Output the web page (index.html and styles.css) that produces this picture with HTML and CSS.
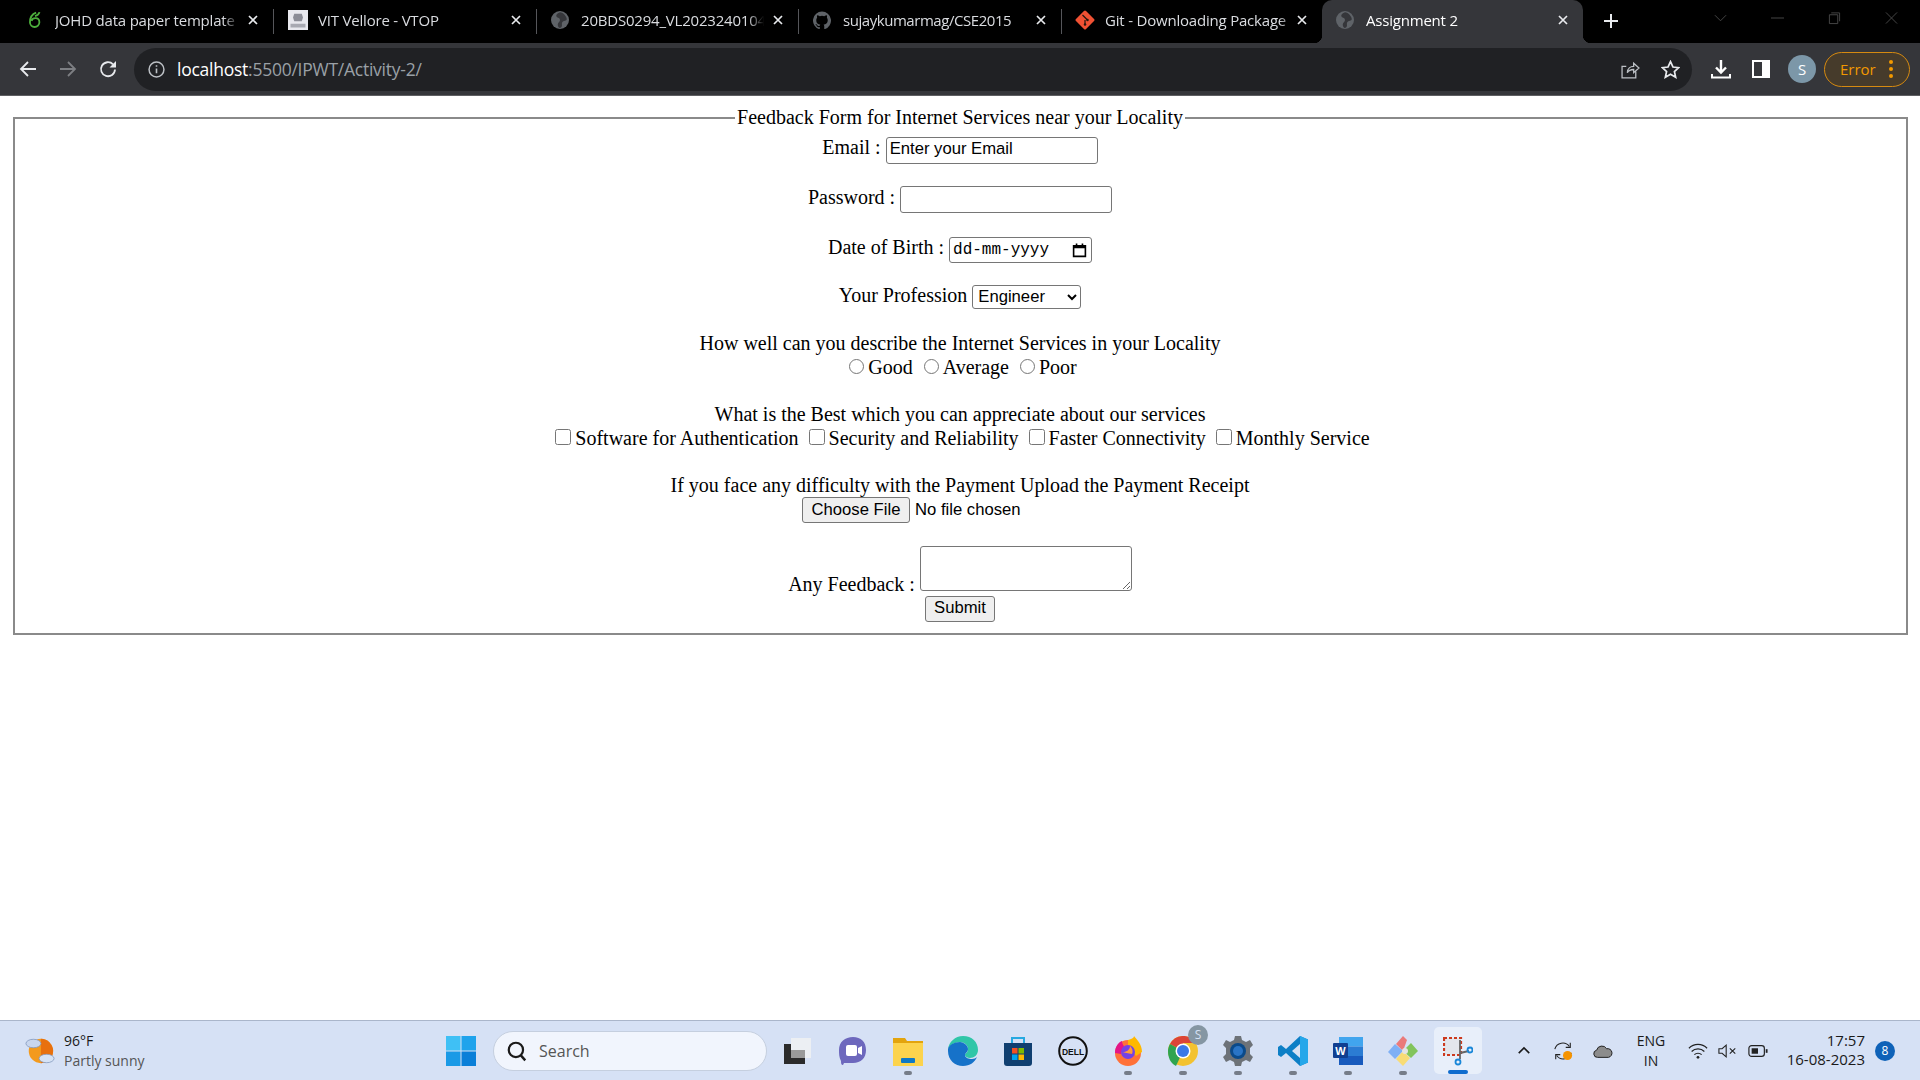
FILE: index.html
```html
<!DOCTYPE html>
<html lang="en">
<head>
<meta charset="utf-8">
<title>Assignment 2</title>
<link rel="stylesheet" href="styles.css">
</head>
<body>
<div class="screen">
  <header class="chrome">
    <div class="tabstrip">
      <div class="tab t1"><svg class="fav" viewBox="0 0 16 16"><path d="M9 1.500C5 3 3.500 7 3.500 10a4.200 4.200 0 1 0 8.400 0c0-2.200-1.600-3.600-3.600-3.600-2 0-3 1.200-3.400 2.400M12 1c-.5 2-2 3-4 3.500" fill="none" stroke="#4cae3c" stroke-width="1.600"/></svg><span class="tt">JOHD data paper template (</span><svg class="x" viewBox="0 0 10 10"><use href="#closex"/></svg></div>
      <div class="sep"></div>
      <div class="tab t2"><svg class="fav fav-lg" viewBox="0 0 16 16"><rect width="16" height="16" fill="#e8e8ee"/><path d="M5 3h6l1 3-1 3H5L4 6z" fill="#8b8c96"/><rect x="2" y="11" width="12" height="3" fill="#a8a9b2"/></svg><span class="tt">VIT Vellore - VTOP</span><svg class="x" viewBox="0 0 10 10"><use href="#closex"/></svg></div>
      <div class="sep"></div>
      <div class="tab t3"><svg class="fav" viewBox="0 0 16 16"><use href="#globe"/></svg><span class="tt">20BDS0294_VL20232401045</span><svg class="x" viewBox="0 0 10 10"><use href="#closex"/></svg></div>
      <div class="sep"></div>
      <div class="tab t4"><svg class="fav" viewBox="0 0 16 16"><path fill="#5f6368" d="M8 .5a8 8 0 0 0-2.500 15.600c.4.100.5-.2.500-.4v-1.400c-2.200.5-2.700-1-2.700-1-.4-.9-.9-1.200-.9-1.200-.7-.5.100-.5.100-.5.800.100 1.200.8 1.200.8.700 1.200 1.900.9 2.300.7.100-.5.300-.9.500-1.100-1.800-.2-3.600-.9-3.600-4 0-.9.300-1.600.8-2.100-.1-.2-.4-1 .1-2.100 0 0 .7-.2 2.200.8a7.500 7.500 0 0 1 4 0c1.500-1 2.200-.8 2.200-.8.500 1.100.2 1.900.1 2.100.5.500.8 1.200.8 2.100 0 3.100-1.900 3.800-3.700 4 .3.300.6.800.6 1.500v2.200c0 .2.100.5.500.4A8 8 0 0 0 8 .5z"/></svg><span class="tt">sujaykumarmag/CSE2015</span><svg class="x" viewBox="0 0 10 10"><use href="#closex"/></svg></div>
      <div class="sep"></div>
      <div class="tab t5"><svg class="fav fav-lg" viewBox="0 0 16 16"><rect x="2.300" y="2.300" width="11.400" height="11.400" rx="1.200" transform="rotate(45 8 8)" fill="#f05133"/><path d="M6 4l4 4M8 8v3.500" stroke="#26170f" stroke-width="1"/><circle cx="8" cy="11.500" r="1" fill="#26170f"/><circle cx="10" cy="8" r="1" fill="#26170f"/></svg><span class="tt">Git - Downloading Package</span><svg class="x" viewBox="0 0 10 10"><use href="#closex"/></svg></div>
      <div class="tab active"><svg class="fav" viewBox="0 0 16 16"><use href="#globe"/></svg><span class="tt">Assignment 2</span><svg class="x" viewBox="0 0 10 10"><use href="#closex"/></svg></div>
      <svg class="newtab" viewBox="0 0 16 16"><path d="M8 1v14M1 8h14" stroke="#e8eaed" stroke-width="2"/></svg>
      <div class="winctl">
        <svg viewBox="0 0 14 14" class="wc"><path d="M1 4l6 6 6-6" fill="none" stroke="#4a4a4a"/></svg>
        <svg viewBox="0 0 14 14" class="wc"><path d="M0 7h14" stroke="#4a4a4a"/></svg>
        <svg viewBox="0 0 14 14" class="wc"><path d="M1.500 3.500h9v9.500h-9zM3.500 1.500h9v9" fill="none" stroke="#4a4a4a"/></svg>
        <svg viewBox="0 0 14 14" class="wc"><path d="M1 1l12 12M13 1L1 13" stroke="#4a4a4a"/></svg>
      </div>
    </div>
    <div class="toolbar">
      <svg class="nav" viewBox="0 0 18 18"><path d="M17 9H2M9 2L2 9l7 7" fill="none" stroke="#e8eaed" stroke-width="1.800"/></svg>
      <svg class="nav" viewBox="0 0 18 18"><path d="M1 9h15M9 2l7 7-7 7" fill="none" stroke="#7d7f83" stroke-width="1.800"/></svg>
      <svg class="nav" viewBox="0 0 18 18"><path d="M16 9.500a7 7 0 1 1-2-5.200" fill="none" stroke="#e8eaed" stroke-width="1.800"/><path d="M17 1v6.500h-6.500z" fill="#e8eaed"/></svg>
      <div class="omnibox">
        <svg class="info" viewBox="0 0 16 16"><circle cx="8" cy="8" r="7" fill="none" stroke="#bdc1c6" stroke-width="1.400"/><path d="M8 7v4.500M8 4v1.500" stroke="#bdc1c6" stroke-width="1.500"/></svg>
        <div class="url"><span class="host">localhost</span>:5500/IPWT/Activity-2/</div>
        <svg class="omni-ic share" viewBox="0 0 18 18"><path d="M14 11v6H1V6h4M6 12c0-4 3-6 6-6V3l5 4.500L12 12V9c-3 0-5 1-6 3z" fill="none" stroke="#bdc1c6" stroke-width="1.200"/></svg>
        <svg class="omni-ic" viewBox="0 0 18 18"><path d="M9 1.500l2.300 5.100 5.500.6-4.100 3.700 1.200 5.400L9 13.500l-4.900 2.800 1.200-5.400-4.100-3.700 5.500-.6z" fill="none" stroke="#e8eaed" stroke-width="1.600"/></svg>
      </div>
      <svg class="tool first" viewBox="0 0 20 20"><path d="M10 1v12M5 8.500l5 5 5-5" fill="none" stroke="#fff" stroke-width="2.400"/><path d="M1 15v3.500h18V15" fill="none" stroke="#fff" stroke-width="2"/></svg>
      <svg class="tool panel" viewBox="0 0 18 18"><rect x="1" y="1" width="16" height="16" fill="none" stroke="#fff" stroke-width="2"/><rect x="10" y="1" width="7" height="16" fill="#fff"/></svg>
      <div class="avatar">S</div>
      <div class="error"><span>Error</span><i class="dots"><b></b><b></b><b></b></i></div>
    </div>
  </header>

  <main class="page">
    <form class="fb">
      <fieldset>
        <legend>Feedback Form for Internet Services near your Locality</legend>
        <div class="line l-email">Email : <input type="text" class="txt" value="Enter your Email"></div>
        <div class="line l-pw">Password : <input type="password" class="txt"></div>
        <div class="line l-dob">Date of Birth : <span class="date"><span class="date-v">dd-mm-yyyy</span><svg class="cal" viewBox="0 0 14 14"><path d="M1.500 2.500h11v10h-11z" fill="none" stroke="#000" stroke-width="1.500"/><path d="M1 2h12v3H1zM3.500 0.500h1.500v2H3.500zM9 0.500h1.500v2H9z" fill="#000"/></svg></span></div>
        <div class="line l-prof">Your Profession <select class="sel"><option>Engineer</option></select></div>
        <div class="line l-how">How well can you describe the Internet Services in your Locality</div>
        <div class="line l-rad"><input type="radio" name="q" class="rad">Good <input type="radio" name="q" class="rad">Average <input type="radio" name="q" class="rad">Poor</div>
        <div class="line l-what">What is the Best which you can appreciate about our services</div>
        <div class="line l-chk"><input type="checkbox" class="chk">Software for Authentication <input type="checkbox" class="chk">Security and Reliability <input type="checkbox" class="chk">Faster Connectivity <input type="checkbox" class="chk">Monthly Service</div>
        <div class="line l-if">If you face any difficulty with the Payment Upload the Payment Receipt</div>
        <div class="line l-file"><input type="file" class="file"></div>
        <div class="line l-fb">Any Feedback : <textarea class="ta"></textarea></div>
        <div class="line l-sub"><input type="submit" class="sub" value="Submit"></div>
      </fieldset>
    </form>
  </main>

  <footer class="taskbar">
    <div class="weather">
      <svg class="wx" viewBox="0 0 32 32"><circle cx="17" cy="16" r="13" fill="#f39a1d"/><path d="M17 3a13 13 0 0 1 0 26z" fill="#e8700e"/><ellipse cx="9" cy="8" rx="8" ry="4.500" fill="#c8d6ee" stroke="#7f95bb" stroke-width=".8"/><ellipse cx="23" cy="24" rx="8" ry="4.500" fill="#d6e2f4" stroke="#7f95bb" stroke-width=".8"/></svg>
      <div class="wtext"><div class="wt1">96°F</div><div class="wt2">Partly sunny</div></div>
    </div>
    <div class="centerbar">
      <svg class="app start" viewBox="0 0 30 30"><rect width="14.500" height="14.500" fill="#3fc0f5"/><rect x="15.500" width="14.500" height="14.500" fill="#1fa3ec"/><rect y="15.500" width="14.500" height="14.500" fill="#1a9ae6"/><rect x="15.500" y="15.500" width="14.500" height="14.500" fill="#0a7fd8"/></svg>
      <div class="search"><svg class="mag" viewBox="0 0 20 20"><circle cx="9" cy="9" r="6.500" fill="none" stroke="#1a1a1a" stroke-width="2"/><path d="M13.500 14l4 4.500" stroke="#1a1a1a" stroke-width="2.200"/></svg><span>Search</span></div>
      <div class="slot"><svg viewBox="0 0 30 30"><rect x="1" y="8" width="21" height="20" fill="#2b2b2b"/><rect x="8" y="2" width="20" height="20" fill="#eceff3"/><rect x="8" y="14" width="14" height="8" fill="#9a9a9a"/></svg></div>
      <div class="slot"><svg viewBox="0 0 30 30"><path d="M15 1c8 0 13 5 13 13s-5 13-13 13h-9l-1 2c-2 0-2-2-2-4C1 21 1 18 1 14 1 6 7 1 15 1z" fill="#6d68bd"/><rect x="8" y="9" width="11" height="11" rx="2" fill="#fff"/><path d="M20 12l4-2v9l-4-2z" fill="#fff"/></svg></div>
      <div class="slot run"><svg viewBox="0 0 30 30"><path d="M0 2h12l2 3h16v25H0z" fill="#e3a40d"/><rect y="7" width="30" height="23" fill="#fcd34d"/><rect x="8" y="22" width="14" height="5" rx="1" fill="#0f79c6"/></svg></div>
      <div class="slot"><svg viewBox="0 0 30 30"><path d="M15 0c9 0 15 6 15 14 0 5-4 8-8 8-3 0-5-2-5-3 0-2 3-2 3-6 0-4-4-7-8-7C7 6 2 9 0 13 1 6 7 0 15 0z" fill="#30c6a8"/><path d="M0 13c1-4 6-7 12-7 3 0 8 3 8 7 0 3-3 4-3 6 0 3 4 4 7 4 2 0 4-1 5-2-2 5-7 9-14 9C7 30 0 24 0 15z" fill="#1672c9"/></svg></div>
      <div class="slot"><svg viewBox="0 0 30 30"><path d="M9 7V2h12v5" fill="none" stroke="#27a9e1" stroke-width="2"/><path d="M1 7h28v20a3 3 0 0 1-3 3H4a3 3 0 0 1-3-3z" fill="#103f70"/><rect x="9" y="12" width="5.500" height="5.500" fill="#f25022"/><rect x="15.500" y="12" width="5.500" height="5.500" fill="#7fba00"/><rect x="9" y="18.500" width="5.500" height="5.500" fill="#00a4ef"/><rect x="15.500" y="18.500" width="5.500" height="5.500" fill="#ffb900"/></svg></div>
      <div class="slot"><svg viewBox="0 0 30 30"><circle cx="15" cy="15" r="13.800" fill="none" stroke="#111" stroke-width="2"/><text x="15" y="18.500" class="dell">DELL</text></svg></div>
      <div class="slot run"><svg viewBox="0 0 30 30"><circle cx="15" cy="17" r="13" fill="#ff7139"/><path d="M15 4c5-1 6-3 6-4 3 4 8 8 8 16l-6 4-8-10z" fill="#ffb800"/><path d="M2 17C2 10 6 6 9 5c0 3 2 5 2 5l-3 8z" fill="#e31587"/><circle cx="15" cy="16" r="7" fill="#7542e5"/><path d="M8 16c3 1 9-1 9-6 3 3 3 6 2 8" fill="#ff9a3d"/></svg></div>
      <div class="slot run"><svg viewBox="0 0 30 30"><circle cx="15" cy="15" r="15" fill="#f3c230"/><path d="M15 15L2 8a15 15 0 0 1 26-1H15z" fill="#dc4437"/><path d="M15 15l-7 15C2 27 0 21 0 15c0-3 1-5 2-7z" fill="#2fa44f"/><circle cx="15" cy="15" r="7.500" fill="#fff"/><circle cx="15" cy="15" r="6" fill="#3b78e7"/></svg><span class="s-badge">S</span></div>
      <div class="slot run"><svg viewBox="0 0 30 30"><path d="M12 0h6l1 4 4 2 4-2 3 5-3 3v6l3 3-3 5-4-2-4 2-1 4h-6l-1-4-4-2-4 2-3-5 3-3v-6L0 9l3-5 4 2 4-2z" fill="#6d7278"/><circle cx="15" cy="15" r="8" fill="#0b4a8a"/><circle cx="15" cy="15" r="5" fill="#2a74c5"/></svg></div>
      <div class="slot run"><svg viewBox="0 0 30 30"><path d="M22 0l8 3.500v23L22 30 8 17l-5 4-3-2v-8l3-2 5 4z" fill="#0d7fc6"/><path d="M22 0l8 3.500v23L22 30z" fill="#26a7ea"/><path d="M22 8l-8 7 8 7z" fill="#d6e2f4"/></svg></div>
      <div class="slot run"><svg viewBox="0 0 30 30"><rect x="6" y="1" width="24" height="9.500" fill="#41a5ee"/><rect x="6" y="10.500" width="24" height="9.500" fill="#2b7cd3"/><rect x="6" y="20" width="24" height="9" fill="#185abd"/><rect y="7" width="15" height="15" rx="1" fill="#103f91"/><text x="7.500" y="18.500" class="word">W</text></svg></div>
      <div class="slot run"><svg viewBox="0 0 30 30"><path d="M15 15L8 8l7-8 4 4z" fill="#ea7a7a"/><path d="M15 15l8-8 7 8-7 7z" fill="#82c45c"/><path d="M15 15l-8-7-7 8 7 7z" fill="#7fb0f5"/><path d="M15 15l7 7-7 8-7-7z" fill="#f8dc76"/><circle cx="17" cy="15" r="3" fill="#e4e4e4"/></svg></div>
      <div class="slot snip"><svg viewBox="0 0 30 30"><rect x="1" y="2" width="17" height="17" fill="#e3e6ec" stroke="#cc3a1e" stroke-width="2.200" stroke-dasharray="3 2"/><path d="M17 4v19M17 17l9-2" stroke="#666" stroke-width="1.800"/><circle cx="27" cy="14" r="2.500" fill="none" stroke="#1a87d8" stroke-width="1.800"/><circle cx="15" cy="26" r="2.500" fill="none" stroke="#1a87d8" stroke-width="1.800"/></svg><i class="snipbar"></i></div>
    </div>
    <div class="tray">
      <svg class="chev" viewBox="0 0 16 10"><path d="M2 8l6-6 6 6" fill="none" stroke="#1a1a1a" stroke-width="1.800"/></svg>
      <svg class="t-ic sync" viewBox="0 0 22 22"><path d="M2 9a9 9 0 0 1 16-3M20 13a9 9 0 0 1-16 3" fill="none" stroke="#222" stroke-width="1.200"/><path d="M19 2v5h-5M3 20v-5h5" fill="none" stroke="#222" stroke-width="1.200"/><circle cx="16" cy="16" r="5" fill="#f59300"/></svg>
      <svg class="t-ic cloud" viewBox="0 0 22 16"><path d="M5 15a4 4 0 0 1-1-7.900 6 6 0 0 1 11-1.600A4.500 4.500 0 0 1 17 15z" fill="#8c8c8c" stroke="#222" stroke-width="1.100"/></svg>
      <div class="lang">ENG<br>IN</div>
      <svg class="t-ic wifi" viewBox="0 0 22 18"><path d="M1 6a14 14 0 0 1 20 0M4 9.500a10 10 0 0 1 14 0M7 13a6 6 0 0 1 8 0" fill="none" stroke="#222" stroke-width="1.300"/><circle cx="11" cy="16" r="1.500" fill="#222"/></svg>
      <svg class="t-ic vol" viewBox="0 0 22 18"><path d="M1 6.500h3.500L9 2.500v13l-4.500-4H1z" fill="none" stroke="#222" stroke-width="1.200"/><path d="M13 6l6 6M19 6l-6 6" stroke="#222" stroke-width="1.200"/></svg>
      <svg class="t-ic batt" viewBox="0 0 22 16"><rect x="1" y="2" width="17" height="12" rx="3" fill="none" stroke="#222" stroke-width="1.300"/><rect x="4" y="5" width="7" height="6" fill="#222"/><path d="M19.500 6h2v4h-2z" fill="#222"/></svg>
      <div class="clock"><div>17:57</div><div>16-08-2023</div></div>
      <div class="notif">8</div>
    </div>
  </footer>
</div>
<svg class="defs" aria-hidden="true"><defs>
  <g id="globe"><circle cx="8" cy="8" r="8" fill="#5f6368"/><path d="M8 1C5 2 4 4 5 5s3 1 3 3-2 2-2 4 1 3 2 3c3-1 1-3 2-5s4-1 4-3-3-6-6-6z" fill="#35363a"/></g>
  <path id="closex" d="M1 1l8 8M9 1l-8 8" stroke="#e8eaed" stroke-width="1.700" fill="none"/>
</defs></svg>
</body>
</html>
```
FILE: styles.css
```css
* { box-sizing: border-box; }
html, body { margin: 0; height: 100%; }
body { overflow: hidden; background: #fff; }
.defs { position: absolute; width: 0; height: 0; }
.screen { width: 1920px; height: 1080px; display: flex; flex-direction: column; }

/* browser chrome */
.chrome { flex: 0 0 96px; display: flex; flex-direction: column; background: #35363a; border-bottom: 1px solid #5e5f62; font-family: "Open Sans", "Liberation Sans", sans-serif; }
.tabstrip { flex: 0 0 43px; background: #000; display: flex; align-items: stretch; padding-left: 11px; }
.tab { display: flex; align-items: center; color: #dadce0; font-size: 15px; letter-spacing: -.2px; padding-left: 15px; padding-bottom: 3px; position: relative; flex: none; }
.t1 { width: 262px; }
.t1 .fav { margin-right: 11px; }
.t2 { width: 262px; padding-left: 14px; }
.t3 { width: 261px; padding-left: 14px; }
.t4 { width: 262px; padding-left: 14px; letter-spacing: -.45px; }
.t5 { width: 260px; padding-left: 13px; }
.t5 .tt { margin-right: 2px; }
.active { width: 261px; padding-left: 14px; background: #35363a; color: #fff; border-radius: 10px 10px 0 0; }
.active::before, .active::after { content: ""; position: absolute; bottom: 0; width: 8px; height: 8px; }
.active::before { left: -8px; background: radial-gradient(circle at 0 0, #000 8px, #35363a 8.500px); }
.active::after { right: -8px; background: radial-gradient(circle at 100% 0, #000 8px, #35363a 8.500px); }
.sep { width: 1px; height: 25px; margin-top: 9px; background: #55565a; flex: none; }
.fav { width: 18px; height: 18px; flex: none; margin-right: 12px; }
.fav-lg { width: 20px; height: 20px; margin-right: 10px; }
.tt { white-space: nowrap; overflow: hidden; flex: 1; min-width: 0; margin-right: 9px; -webkit-mask-image: linear-gradient(to right, #000 calc(100% - 16px), transparent); mask-image: linear-gradient(to right, #000 calc(100% - 16px), transparent); }
.x { flex: none; width: 10px; height: 10px; margin-right: 15px; }
.newtab { width: 16px; height: 16px; margin: 13px 0 0 20px; flex: none; }
.winctl { margin-left: auto; display: flex; align-items: flex-start; padding: 11px 22px 0 0; gap: 44px; }
.wc { width: 13px; height: 14px; }

.toolbar { flex: 1; display: flex; align-items: center; padding-left: 19px; }
.nav { width: 18px; height: 18px; margin-right: 22px; flex: none; }
.nav:nth-child(3) { margin-right: 0; }
.omnibox { margin-left: 17px; width: 1558px; height: 43px; background: #202124; border-radius: 22px; display: flex; align-items: center; padding-left: 14px; padding-right: 12px; color: #9aa0a6; flex: none; }
.info { width: 17px; height: 17px; flex: none; margin-right: 12px; }
.url { font-size: 17.500px; letter-spacing: -.25px; flex: 1; }
.host { color: #fff; }
.omni-ic { width: 19px; height: 19px; flex: none; }
.share { margin-right: 21px; }
.tool { width: 20px; height: 20px; flex: none; }
.first { margin-left: 19px; }
.panel { width: 18px; height: 18px; margin-left: 21px; }
.avatar { width: 28px; height: 28px; margin-left: 18px; border-radius: 50%; background: #7c97a8; color: #fff; font-size: 15px; display: flex; align-items: center; justify-content: center; flex: none; }
.error { margin-left: 8px; width: 86px; height: 35px; background: #463b2b; border: 1.500px solid #d68a10; border-radius: 18px; color: #f29900; font-size: 15px; display: flex; align-items: center; padding: 0 16px 0 15px; justify-content: space-between; flex: none; }
.dots { display: flex; flex-direction: column; gap: 3px; }
.dots b { width: 4px; height: 4px; border-radius: 50%; background: #f29900; }

/* page */
.page { flex: 1; min-height: 0; padding: 10px 10px 0; font-family: "Liberation Serif", serif; font-size: 20px; color: #000; }
.fb { margin: 0; }
fieldset { margin: 0 2.500px; padding: 0 12px; border: 2px solid #8a8a8a; text-align: center; height: 529px; min-width: 0; }
legend { margin: 0 auto; padding: 0 2.500px; line-height: 23px; }
.line { line-height: 23px; }
.l-email { margin-top: 7px; }
.l-pw { margin-top: 22px; }
.l-dob { margin-top: 23px; }
.l-prof { margin-top: 21px; }
.l-how { margin-top: 23px; }
.l-rad { margin-top: 1px; }
.l-what { margin-top: 24px; }
.l-if { margin-top: 24px; }
.l-fb { margin-top: 23px; }

.txt, .sel, .file, .ta, .sub { font-family: "Liberation Sans", sans-serif; font-size: 16.670px; }
.txt { width: 212px; height: 27px; padding: 0 3px 2px; margin: 0; border: 1px solid #767676; border-radius: 3px; }
.date { display: inline-flex; align-items: center; justify-content: space-between; width: 143px; height: 26px; padding: 0 3px; border: 1px solid #767676; border-radius: 3px; vertical-align: baseline; line-height: 24px; }
.date-v { font-family: "Liberation Mono", monospace; font-size: 16px; }
.cal { width: 15px; height: 15px; margin-right: 1px; }
.sel { width: 109px; height: 24px; margin: 0; padding-left: 1px; border: 1px solid #767676; border-radius: 3px; background: #fff; }
.rad { width: 15px; height: 15px; margin: 3px 4px 0 6px; }
.chk { width: 16px; height: 16px; margin: 3px 4px 0 5px; }
.file { width: 316px; margin: 0; vertical-align: top; }
.file::file-selector-button { font: inherit; height: 26px; width: 108px; margin-right: 5px; border: 1px solid #767676; border-radius: 3px; background: #efefef; padding: 0; }
.l-file { height: 26px; }
.ta { width: 212px; height: 45px; margin: 0; border: 1px solid #767676; border-radius: 3px; padding: 2px; vertical-align: baseline; }
.sub { width: 70px; height: 26px; margin: 0; padding: 0 0 2px; border: 1px solid #767676; border-radius: 3px; background: #efefef; vertical-align: top; }
.l-sub { height: 26px; }

/* taskbar */
.taskbar { flex: 0 0 60px; height: 60px; background: #d6e1f5; border-top: 1px solid #aab6cb; display: flex; align-items: center; font-family: "Open Sans", "Liberation Sans", sans-serif; color: #1a1a1a; }
.weather { width: 446px; display: flex; align-items: center; padding-left: 25px; flex: none; }
.wx { width: 30px; height: 30px; margin-right: 9px; flex: none; }
.wtext { font-size: 14px; line-height: 20px; }
.wt2 { color: #555; }
.centerbar { display: flex; align-items: center; flex: none; }
.app, .slot svg { width: 30px; height: 30px; display: block; }
.start { margin-right: 17px; }
.search { width: 274px; height: 40px; border-radius: 20px; background: #f1f5fd; border: 1px solid #c5cfdf; display: flex; align-items: center; padding-left: 12px; color: #555; font-size: 16px; flex: none; margin-right: 3px; }
.mag { width: 22px; height: 22px; margin-right: 11px; }
.slot { width: 55px; height: 54px; display: flex; align-items: center; justify-content: center; position: relative; flex: none; }
.run::after { content: ""; position: absolute; bottom: 3px; left: 50%; margin-left: -4px; width: 8px; height: 4px; border-radius: 2px; background: #767d89; }
.s-badge { position: absolute; top: 1px; right: 2px; width: 20px; height: 20px; border-radius: 50%; background: #8596a3; color: #d6e1f5; font-size: 12px; display: flex; align-items: center; justify-content: center; }
.dell { font: bold 8.500px "Liberation Sans", sans-serif; text-anchor: middle; fill: #111; }
.word { font: bold 11px "Liberation Sans", sans-serif; text-anchor: middle; fill: #fff; }
.snip { background: #e8effa; border-radius: 5px; width: 48px; height: 47px; margin-left: 3.500px; }
.snipbar { position: absolute; left: 14px; bottom: 0; width: 20px; height: 4px; border-radius: 2px; background: #0f6cce; }
.tray { margin-left: auto; display: flex; align-items: center; padding-right: 25px; flex: none; }
.chev { width: 14px; height: 9px; margin-right: 22px; }
.t-ic { width: 20px; height: 20px; flex: none; }
.sync { margin-right: 20px; }
.cloud { margin-right: 20px; }
.lang { width: 36px; font-size: 14px; line-height: 20px; text-align: center; margin-right: 19px; }
.wifi { margin-right: 10px; }
.vol { margin-right: 10px; }
.clock { width: 96px; margin-left: 1px; font-size: 15px; line-height: 19px; text-align: right; padding-bottom: 2px; }
.notif { width: 20px; height: 20px; margin-left: 10px; border-radius: 50%; background: #0f62b8; color: #fff; font-size: 12px; display: flex; align-items: center; justify-content: center; }
```
